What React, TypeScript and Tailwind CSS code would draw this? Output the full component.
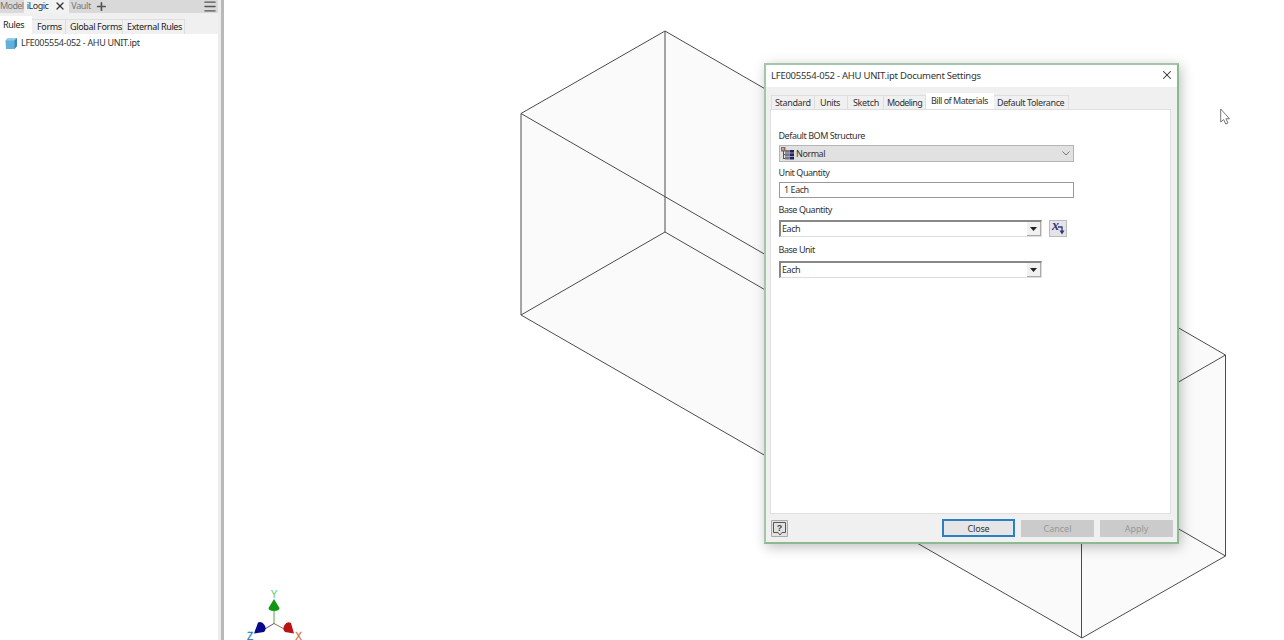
import { ReactNode } from 'react';
import { Menu, Plus, X } from 'lucide-react';

const ruleTabs = [
  { label: 'Forms', className: 'w-[34px] pl-[5px]' },
  { label: 'Global Forms', className: 'w-[57px] pl-[4px]' },
  { label: 'External Rules', className: 'w-[62px] pl-[4px]' },
];

const Model = () => (
  <svg className="absolute inset-0" width="1284" height="640" fill="none">
    <path d="M521 114 665 31 1225 355V556L1082 638 521 315Z" fill="#fafafa" />
    <g stroke="#4c4c4c" strokeWidth="1">
      <path d="M521 113.500 665 31 1225.500 355 1082 437.500Z" />
      <path d="M521 315 665 232 1225.500 556 1082 638Z" />
      <path d="M521 113.500V315M665 31V232M1225.500 355V556M1081.500 437V638" />
    </g>
  </svg>
);

const Axes = () => (
  <svg className="absolute left-[240px] top-[586px]" width="70" height="54">
    <path d="M34 20V38" stroke="#4daa4d" />
    <path d="M34 37.500 23 44" stroke="#5555a0" />
    <path d="M34 37.500 46 44" stroke="#a56a50" />
    <path d="M34 13 39.500 22Q39.500 25 34 25T28.500 22Z" fill="#149414" />
    <path d="M14 47.500 18 36.500Q22 35 24.500 39T24 46Z" fill="#08088c" />
    <path d="M54 47.500 51 37Q47 35 44.500 39T45 46Z" fill="#b81414" />
    <g fontFamily="Liberation Sans" fontSize="10" textAnchor="middle">
      <text x="34" y="12" fill="#5ecb5e">
        Y
      </text>
      <text x="10" y="54" fill="#2583b8" stroke="#2583b8" strokeWidth=".3">
        Z
      </text>
      <text x="58.500" y="54" fill="#c97544" stroke="#c97544" strokeWidth=".3">
        X
      </text>
    </g>
  </svg>
);

const Sidebar = () => (
  <div className="relative flex h-full w-[224px] border-r-[3px] border-[#b9b9b9] bg-[#ececec]">
    <div className="w-[218px] bg-white">
      <div className="flex h-[13px] bg-[#d9d9d9] leading-[12px] text-[#777]">
        <div className="w-[24px] tracking-[-0.6px]">Model</div>
        <div className="flex w-[46px] bg-[#f2f2f2] pl-[3px] text-[#333]">
          <span className="w-[27px] tracking-[-0.5px]">iLogic</span>
          <X className="mt-0 h-[12px] w-[12px]" strokeWidth={2.500} />
        </div>
        <div className="w-[26px] pl-[2px] tracking-[-0.4px]">Vault</div>
        <Plus className="h-[13px] w-[13px] text-[#555]" strokeWidth={3.200} />
        <Menu
          className="-mt-px ml-[94px] h-[15px] w-[16px] shrink-0 text-[#555]"
          strokeWidth={2.300}
        />
      </div>
      <div className="flex h-[21px] items-end bg-[#f0f0f0] text-[#222]">
        <div className="h-[18px] w-[32px] bg-white pl-[3px] leading-[18px] tracking-[-0.35px]">
          Rules
        </div>
        {ruleTabs.map((tab) => (
          <div
            key={tab.label}
            className={`h-[15px] border-r border-t border-[#dedede] leading-[13px] tracking-[-0.35px] ${tab.className}`}
          >
            {tab.label}
          </div>
        ))}
      </div>
      <div className="flex h-[18px] items-center pl-[5px] text-[#333]">
        <svg className="mr-[3px]" width="13" height="13">
          <path d="M.5 3.500 3 1H12V9L9.500 12H1Z" fill="#62b0d8" />
          <path d="M.5 3.500 3 1H12L9.500 3.500Z" fill="#91cde8" />
          <path d="M9.500 3.500 12 1V9L9.500 12Z" fill="#3c87b2" />
        </svg>
        <span className="tracking-[-0.3px]">LFE005554-052 - AHU UNIT.ipt</span>
      </div>
    </div>
  </div>
);

const dialogTabs = [
  { label: 'Standard', className: 'w-[44px] border-l tracking-[-0.35px]' },
  { label: 'Units', className: 'w-[33px] pl-[5px] tracking-[-0.4px]' },
  { label: 'Sketch', className: 'w-[36px] pl-[5px] tracking-[-0.35px]' },
  { label: 'Modeling', className: 'w-[42px] tracking-[-0.6px]' },
  {
    label: 'Bill of Materials',
    active: true,
    className: 'w-[68px] pl-[5px] tracking-[-0.5px]',
  },
  { label: 'Default Tolerance', className: 'w-[75px] tracking-[-0.4px]' },
];

const Combo = ({ children }: { children: ReactNode }) => (
  <div className="flex h-[17px] w-[263px] justify-between border border-l-2 border-t-2 border-[#ddd] border-l-[#888] border-t-[#888] bg-white pl-px leading-[14px]">
    {children}
    <div className="flex h-[14px] w-[14px] items-center justify-center border-b border-r border-[#aaa] bg-[#f1f1f1]">
      <svg width="7" height="4">
        <path d="M0 0H7L3.500 4Z" fill="#222" />
      </svg>
    </div>
  </div>
);

const BomIcon = () => (
  <svg className="-mt-px mr-[2px]" width="13" height="13">
    <path d="M0 0H4.500V4.500H0Z" fill="#8c6a62" />
    <path d="M1 1H3V3H1Z" fill="#c6a59a" />
    <path d="M2.500 4V11.500M2 7.500H5M2 11.500H5M5 3.500H7" stroke="#555" />
    <path d="M4 3H8V12.500H4Z" fill="#77748a" />
    <path d="M8.500 3H13V12.500H8.500Z" fill="#20245e" />
    <path d="M4 6H13M4 9.500H13" stroke="#b8b8cc" strokeWidth=".8" />
  </svg>
);

const Dialog = () => (
  <div className="absolute left-[764px] top-[63px] flex h-[481px] w-[415px] flex-col border-2 border-[#a5c4a8] border-b-[#8db991] border-r-[#8db991] bg-[#f0f0f0] text-[#333] shadow-[2px_3px_12px_rgba(0,0,0,0.25)]">
    <div className="flex h-[22px] items-center justify-between bg-white pl-[5px] pr-[3px]">
      <span className="text-[9.500px] tracking-[-0.26px]">
        LFE005554-052 - AHU UNIT.ipt Document Settings
      </span>
      <X className="-mt-[2px] h-[14px] w-[14px]" strokeWidth={1.800} />
    </div>
    <div className="flex h-[22px] items-end pl-[5px]">
      {dialogTabs.map((tab) => (
        <div
          key={tab.label}
          className={`${tab.className.includes('pl-') ? '' : 'pl-[3px]'} ${tab.className} ${
            tab.active
              ? 'h-[16px] bg-white leading-[15px]'
              : 'h-[14px] border-r border-t border-[#dedede] leading-[13px]'
          }`}
        >
          {tab.label}
        </div>
      ))}
    </div>
    <div className="ml-[4px] flex h-[405px] w-[401px] flex-col items-start border border-[#dfdfdf] bg-white pl-[8px] pt-[18px] leading-[16px] tracking-[-0.45px]">
      <div className="-ml-[0.5px] h-[17px]">Default BOM Structure</div>
      <div className="flex h-[17px] w-[295px] items-center border border-[#b5b5b5] bg-[#e1e1e1] pl-px pr-[3px]">
        <BomIcon />
        <span>Normal</span>
        <svg className="ml-auto" width="8" height="5" fill="none">
          <path d="M.5.5 4 4 7.500.5" stroke="#777" />
        </svg>
      </div>
      <div className="-ml-[0.5px] mt-[3px]">Unit Quantity</div>
      <div className="mt-px h-[16px] w-[295px] border border-[#999] pl-[4px] leading-[14px]">
        1 Each
      </div>
      <div className="-ml-[0.5px] mt-[4px]">Base Quantity</div>
      <div className="mt-[2px] flex items-start gap-[7px]">
        <Combo>Each</Combo>
        <div className="relative h-[17px] w-[18px] border border-[#bbb] bg-[#e3e3e8]">
          <span className="absolute -top-[2px] left-[2px] font-['Liberation_Serif',serif] text-[14px] font-bold italic leading-[14px] text-[#343878]">
            x
          </span>
          <svg className="absolute right-px top-[4px]" width="7" height="10">
            <path d="M0 2H4V6" fill="none" stroke="#343878" strokeWidth="1.300" />
            <path d="M1.500 5.500H6.500L4 9.500Z" fill="#343878" />
          </svg>
        </div>
      </div>
      <div className="-ml-[0.5px] mt-[5px]">Base Unit</div>
      <div className="mt-[3px]">
        <Combo>Each</Combo>
      </div>
    </div>
    <div className="flex items-center pl-[5px] pt-[5px] text-center leading-[18px]">
      <svg width="17" height="17" fill="none">
        <path d="M.5.5H16.500V16.500H.5Z" fill="#e2e2e2" stroke="#aaa" />
        <path d="M2.500 2.500H14.500V12.500H11L9 15 7 12.500H2.500Z" stroke="#555" />
        <text
          x="8.500"
          y="11"
          textAnchor="middle"
          fontFamily="Liberation Sans"
          fontSize="9"
          fontWeight="bold"
          fill="#444"
        >
          ?
        </text>
      </svg>
      <div className="ml-[154px] h-[18px] w-[73px] border-2 border-[#2a80c4] bg-[#e6e6e6] leading-[15px] tracking-[-0.2px]">
        Close
      </div>
      <div className="ml-[6px] h-[17px] w-[73px] bg-[#cbcbcb] text-[#989898]">
        Cancel
      </div>
      <div className="ml-[6px] h-[17px] w-[73px] bg-[#cbcbcb] text-[#989898]">
        Apply
      </div>
    </div>
  </div>
);

export default function App() {
  return (
    <div className="relative h-[640px] w-[1284px] overflow-hidden whitespace-nowrap bg-white font-['Noto_Sans',sans-serif] text-[9px] leading-[12px]">
      <Model />
      <Axes />
      <Sidebar />
      <Dialog />
      <svg className="absolute left-[1220px] top-[108px]" width="12" height="18">
        <path
          d="M.7 1V14L3.700 11.500 5.700 16 8 15 6 10.800H9.500Z"
          fill="#fff"
          stroke="#777"
        />
      </svg>
    </div>
  );
}
